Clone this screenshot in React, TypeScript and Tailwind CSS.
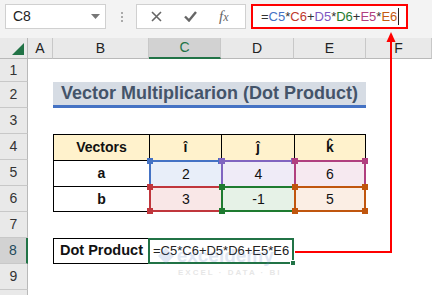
const Handle = ({ pos, color }: { pos: string; color: string }) => (
  <span className={`absolute z-10 h-[6px] w-[6px] ${pos} ${color}`} />
);

const RowHead = ({ n, active = false }: { n?: number; active?: boolean }) => (
  <div
    className={`flex items-center justify-center border-b border-[#c8c8c8] text-[14px] ${
      active
        ? "border-r-2 border-r-[#217346] bg-[#d2d2d2] text-[#21495a]"
        : "border-r border-r-[#b9b9b9] bg-[#e9e9e9] text-[#333]"
    }`}
  >
    {n}
  </div>
);

const ColHead = ({ label, active = false }: { label: string; active?: boolean }) => (
  <div
    className={`flex items-center justify-center border-r border-[#c8c8c8] text-[14px] ${
      active
        ? "border-b-2 border-b-[#217346] bg-[#d2d2d2] text-[#217346]"
        : "border-b border-b-[#b9b9b9] bg-[#e9e9e9] text-[#222]"
    }`}
  >
    {label}
  </div>
);

const Empty = () => <div />;

const FormulaText = () => (
  <>
    <span>=</span>
    <span className="text-[#4472c4]">C5</span>
    <span>*</span>
    <span className="text-[#c0392b]">C6</span>
    <span>+</span>
    <span className="text-[#7e57c2]">D5</span>
    <span>*</span>
    <span className="text-[#1e7b30]">D6</span>
    <span>+</span>
    <span className="text-[#b0407f]">E5</span>
    <span>*</span>
    <span className="text-[#c55a11]">E6</span>
  </>
);

export default function App() {
  return (
    <div className="relative h-[295px] w-[432px] overflow-hidden bg-white font-['Liberation_Sans',Arial,sans-serif]">
      {/* formula bar */}
      <div className="flex h-[38px] items-start bg-[#f3f3f3] pt-[4px]">
        <div className="ml-[5px] flex h-[25px] w-[101px] items-center justify-between border border-[#d0d0d0] bg-white pl-[7px] pr-[5px] text-[14px] text-[#222]">
          <span>C8</span>
          <svg width="9" height="5" viewBox="0 0 9 5">
            <path d="M0 0h9L4.5 5z" fill="#777" />
          </svg>
        </div>
        <div className="ml-[15px] mr-[13px] mt-[8px] flex flex-col gap-[2px]">
          <span className="h-[2px] w-[2px] bg-[#aaa]" />
          <span className="h-[2px] w-[2px] bg-[#aaa]" />
          <span className="h-[2px] w-[2px] bg-[#aaa]" />
        </div>
        <div className="flex h-[25px] w-[110px] items-center border border-[#d0d0d0] bg-white">
          <svg className="ml-[14px]" width="11" height="11" viewBox="0 0 11 11">
            <path d="M1 1l9 9M10 1l-9 9" stroke="#666" strokeWidth="1.6" />
          </svg>
          <svg className="ml-[22px]" width="13" height="11" viewBox="0 0 13 11">
            <path d="M1 5.5l4 4 7-8.5" stroke="#666" strokeWidth="2.4" fill="none" />
          </svg>
          <span className="ml-[22px] font-['Liberation_Serif',serif] text-[15px] italic text-[#666]">
            f<span className="text-[12px]">x</span>
          </span>
        </div>
        <div className="ml-[5px] flex h-[25px] w-[157px] items-center border-2 border-[#ff0000] bg-white pl-[8px] text-[13px] text-[#333]">
          <FormulaText />
          <span className="ml-[1px] h-[17px] w-px bg-[#222]" />
        </div>
      </div>

      {/* sheet */}
      <div className="grid grid-cols-[28px_25px_96px_72px_73px_72px_66px] grid-rows-[21px_23px_repeat(9,26px)] text-[14px] text-[#111]">
        <div className="relative border-b border-r border-[#b9b9b9] bg-[#e9e9e9]">
          <svg className="absolute bottom-[3px] right-[3px]" width="12" height="12" viewBox="0 0 12 12">
            <path d="M12 0v12H0z" fill="#217346" />
          </svg>
        </div>
        <ColHead label="A" />
        <ColHead label="B" />
        <ColHead label="C" active />
        <ColHead label="D" />
        <ColHead label="E" />
        <ColHead label="F" />

        {/* row 1 */}
        <RowHead n={1} />
        <Empty /><Empty /><Empty /><Empty /><Empty /><Empty />

        {/* row 2 */}
        <RowHead n={2} />
        <Empty />
        <div className="col-span-4 flex items-center justify-center border-b-[3px] border-[#4472c4] bg-[#d6dce4] text-[18px] font-bold text-[#44546a]">
          Vector Multiplicarion (Dot Product)
        </div>
        <Empty />

        {/* row 3 */}
        <RowHead n={3} />
        <Empty /><Empty /><Empty /><Empty /><Empty /><Empty />

        {/* row 4 */}
        <RowHead n={4} />
        <Empty />
        <div className="flex items-center justify-center border-l border-t border-black bg-[#fff2cc] font-bold">Vectors</div>
        <div className="flex items-center justify-center border-l border-t border-black bg-[#fff2cc] font-bold">î</div>
        <div className="flex items-center justify-center border-l border-t border-black bg-[#fff2cc] font-bold">ĵ</div>
        <div className="flex items-center justify-center border-l border-r border-t border-black bg-[#fff2cc] font-bold">k̂</div>
        <Empty />

        {/* row 5 */}
        <RowHead n={5} />
        <Empty />
        <div className="flex items-center justify-center border-l border-t border-black font-bold">a</div>
        <div className="relative flex items-center justify-center border-l-2 border-t-2 border-[#4472c4] bg-[#e8eef9]">
          2
          <Handle pos="-left-[4px] -top-[4px]" color="bg-[#4472c4]" />
          <Handle pos="-right-[3px] -top-[4px]" color="bg-[#4472c4]" />
        </div>
        <div className="relative flex items-center justify-center border-l-2 border-t-2 border-[#8064c0] bg-[#efebf7]">
          4
          <Handle pos="-left-[4px] -top-[4px]" color="bg-[#8064c0]" />
          <Handle pos="-right-[3px] -top-[4px]" color="bg-[#8064c0]" />
        </div>
        <div className="relative flex items-center justify-center border-l-2 border-r-2 border-t-2 border-[#b0407f] bg-[#f6e9f0]">
          6
          <Handle pos="-left-[4px] -top-[4px]" color="bg-[#b0407f]" />
          <Handle pos="-right-[4px] -top-[4px]" color="bg-[#b0407f]" />
        </div>
        <Empty />

        {/* row 6 */}
        <RowHead n={6} />
        <Empty />
        <div className="flex items-center justify-center border-b border-l border-t border-black font-bold">b</div>
        <div className="relative flex items-center justify-center border-b-2 border-l-2 border-t-2 border-[#c0363c] bg-[#f9e7e7]">
          3
          <Handle pos="-left-[4px] -top-[4px]" color="bg-[#c0363c]" />
          <Handle pos="-left-[4px] -bottom-[4px]" color="bg-[#c0363c]" />
        </div>
        <div className="relative flex items-center justify-center border-b-2 border-l-2 border-t-2 border-[#1e7b30] bg-[#e6f2e7]">
          -1
          <Handle pos="-left-[4px] -top-[4px]" color="bg-[#1e7b30]" />
          <Handle pos="-left-[4px] -bottom-[4px]" color="bg-[#1e7b30]" />
        </div>
        <div className="relative flex items-center justify-center border-2 border-[#c0560e] bg-[#fbeee4]">
          5
          <Handle pos="-left-[4px] -top-[4px]" color="bg-[#c0560e]" />
          <Handle pos="-left-[4px] -bottom-[4px]" color="bg-[#c0560e]" />
          <Handle pos="-right-[4px] -top-[4px]" color="bg-[#c0560e]" />
          <Handle pos="-right-[4px] -bottom-[4px]" color="bg-[#c0560e]" />
        </div>
        <Empty />

        {/* row 7 */}
        <RowHead n={7} />
        <Empty /><Empty /><Empty /><Empty /><Empty /><Empty />

        {/* row 8 */}
        <RowHead n={8} active />
        <Empty />
        <div className="flex items-center border border-black pl-[6px] text-[14.5px] font-bold">Dot Product</div>
        <div className="relative col-span-2 -ml-px flex items-center border-2 border-[#217346] pl-[3px] text-[13px] text-[#222]">
          =C5*C6+D5*D6+E5*E6
          <span className="absolute -bottom-[4px] -right-[4px] z-10 h-[6px] w-[6px] border border-white bg-[#217346]" />
        </div>
        <Empty /><Empty />

        {/* row 9 */}
        <RowHead n={9} />
        <Empty /><Empty /><Empty /><Empty /><Empty /><Empty />

        <RowHead />
        <Empty /><Empty /><Empty /><Empty /><Empty /><Empty />
      </div>

      {/* watermark */}
      <div className="pointer-events-none absolute left-[150px] top-[246px] flex flex-col items-center opacity-20">
        <div className="flex items-center gap-[3px]">
          <svg width="16" height="16" viewBox="0 0 16 16">
            <path d="M8 0l8 8-8 8-8-8z" fill="#6b8bc9" />
          </svg>
          <span className="text-[19px] font-bold leading-none text-[#6b8bc9]">exceldemy</span>
        </div>
        <span className="ml-[28px] mt-[2px] text-[8px] font-bold tracking-[2px] text-[#888]">EXCEL · DATA · BI</span>
      </div>

      {/* red arrow */}
      <svg className="pointer-events-none absolute left-0 top-0" width="432" height="295" viewBox="0 0 432 295">
        <path d="M391 40V252H295" stroke="#ff0000" strokeWidth="2" fill="none" />
        <path d="M391 32l-4.5 10h9z" fill="#ff0000" />
      </svg>
    </div>
  );
}
